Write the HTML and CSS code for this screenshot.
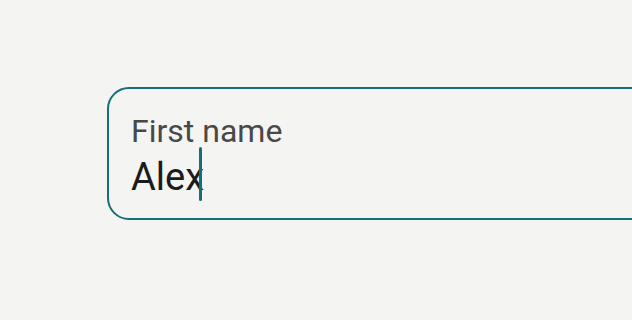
FILE: index.html
```html
<!DOCTYPE html>
<html lang="en">
<head>
<meta charset="utf-8">
<title>Text field</title>
<link rel="stylesheet" href="styles.css">
</head>
<body>
<div class="stage">
  <label class="field">
    <span class="field-label">First name</span>
    <span class="field-value"><span class="value-text">Alex</span><span class="caret"></span></span>
  </label>
</div>
</body>
</html>
```

FILE: styles.css
```css
html, body {
  margin: 0;
  padding: 0;
  background: #f4f4f2;
  overflow: hidden;
}
body {
  width: 632px;
  height: 320px;
  font-family: Roboto, "Noto Sans", sans-serif;
}
.stage {
  box-sizing: border-box;
  width: 632px;
  height: 320px;
  overflow: hidden;
  padding: 87px 0 0 107px;
}
.field {
  box-sizing: border-box;
  display: flex;
  flex-direction: column;
  gap: 4px;
  width: 600px;
  height: 133px;
  padding: 24px 20px 17px 22px;
  border: 2px solid #146f79;
  border-radius: 22px;
}
.field-label {
  font-size: 32px;
  line-height: 36px;
  color: #484848;
}
.field-value {
  display: flex;
  align-items: flex-end;
  font-size: 38px;
  line-height: 48px;
  color: #1b1b1b;
}
.caret {
  display: block;
  flex: none;
  width: 3px;
  height: 54px;
  margin-top: -6px;
  margin-left: -4.9px;
  border-radius: 2px;
  background: #146f79;
}
```
